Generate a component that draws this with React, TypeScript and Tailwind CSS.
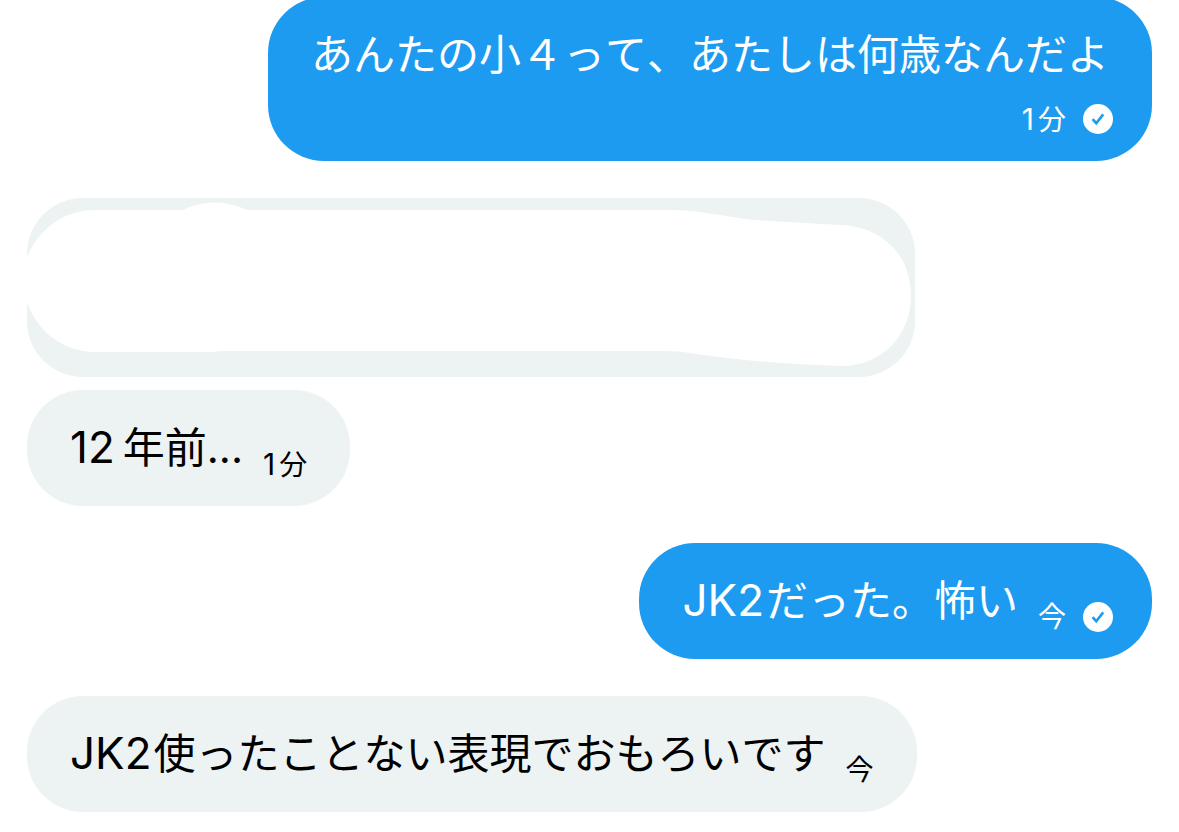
import type { ReactNode } from "react";

function Latin({ children, wide = false }: { children: ReactNode; wide?: boolean }) {
  return <span className={`text-[44px] leading-none ${wide ? "mr-2" : "mr-0.5"}`}>{children}</span>;
}

function SentBadge() {
  return (
    <svg viewBox="0 0 30 30" className="ml-[17px] size-[30px] shrink-0" role="img" aria-label="送信済み">
      <circle cx="15" cy="15" r="15" fill="#fff" />
      <path d="M9.6 15.2 L13.2 19.2 L20.2 10.4" fill="none" stroke="#1d9bf0" strokeWidth="2.6" />
    </svg>
  );
}

function Minutes({ value }: { value: number }) {
  return (
    <>
      <span className="mr-1 text-[30px] leading-none">{value}</span>分
    </>
  );
}

function Time({ children, sent = false }: { children: ReactNode; sent?: boolean }) {
  return (
    <div className={sent ? "-mr-1 flex h-6 items-center self-end" : "flex h-6 items-center self-end"}>
      <time className="text-[28px] leading-6 whitespace-nowrap">{children}</time>
      {sent && <SentBadge />}
    </div>
  );
}

function Bubble({ children, sent = false, stacked = false }: { children: ReactNode; sent?: boolean; stacked?: boolean }) {
  return (
    <li
      className={`flex max-w-full rounded-[56px] px-[43px] py-[30px] text-[42px] leading-[56px] ${
        sent ? "self-end bg-[#1d9bf0] text-white" : "self-start bg-[#edf2f3] text-black"
      } ${stacked ? "flex-col gap-6" : "gap-5"}`}
    >
      {children}
    </li>
  );
}

function ErasedBubble() {
  return (
    <li className="relative h-[179px] w-[888px] max-w-full self-start overflow-hidden rounded-[56px] bg-[#edf2f3]">
      <svg viewBox="27 198 888 179" className="absolute inset-0 size-full" preserveAspectRatio="none" aria-hidden="true">
        <path
          fill="#fff"
          d="M26 259 C38 229 64 210 95 210 H180 C184 210 186 208 190 207 C205 201 225 201 240 207 C244 209 246 210 250 210 H670 C705 210 730 219 770 221 L840 225 C882 226 911 255 911 296 C911 335 882 366 842 366 C790 364 740 361 690 353 Q678 351 665 351 H220 L214 352 H95 C64 352 37 332 26 300 Z"
        />
      </svg>
    </li>
  );
}

function Group({ children }: { children: ReactNode }) {
  return <ul className="flex flex-col gap-[13px]">{children}</ul>;
}

export default function App() {
  return (
    <main
      className="min-h-screen overflow-hidden bg-white px-[27px] pb-5 font-['Inter','Noto_Sans_CJK_JP',sans-serif] [font-kerning:none]"
      lang="ja"
    >
      <div className="-mt-[3px] flex flex-col gap-[37px]">
        <Group>
          <Bubble sent stacked>
            <p>あんたの小４って、あたしは何歳なんだよ</p>
            <Time sent>
              <Minutes value={1} />
            </Time>
          </Bubble>
        </Group>
        <Group>
          <ErasedBubble />
          <Bubble>
            <p>
              <Latin wide>12</Latin>年前...
            </p>
            <Time>
              <Minutes value={1} />
            </Time>
          </Bubble>
        </Group>
        <Group>
          <Bubble sent>
            <p>
              <Latin>JK2</Latin>だった。怖い
            </p>
            <Time sent>今</Time>
          </Bubble>
        </Group>
        <Group>
          <Bubble>
            <p>
              <Latin>JK2</Latin>使ったことない表現でおもろいです
            </p>
            <Time>今</Time>
          </Bubble>
        </Group>
      </div>
    </main>
  );
}
